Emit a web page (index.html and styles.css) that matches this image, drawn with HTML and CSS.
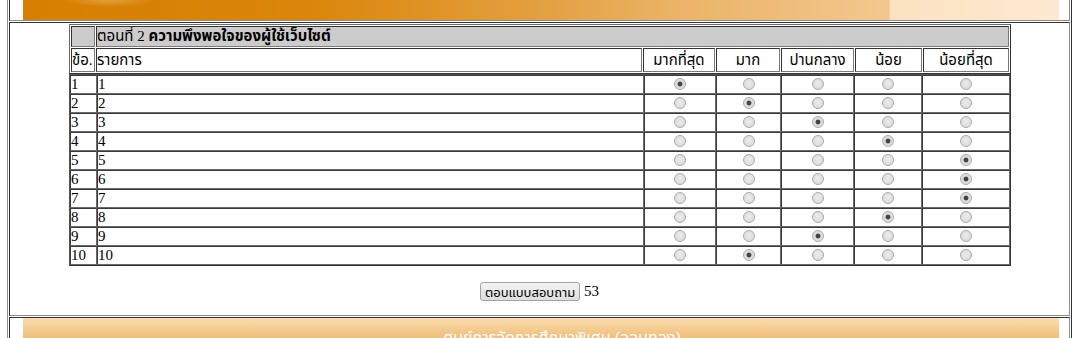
FILE: index.html
```html
<!DOCTYPE html>
<html lang="th">
<head>
    <meta charset="UTF-8">
    <title>แบบสอบถามความพึงพอใจ</title>
    <link rel="stylesheet" href="styles.css">
</head>
<body>
    <div class="frame">
        <div class="cell banner-cell">
            <div class="top-banner"></div>
        </div>

        <div class="cell content-cell">
            <form class="survey">
                <table class="survey-head">
                    <colgroup>
                        <col class="h-no"><col class="h-item"><col class="h-a"><col class="h-b"><col class="h-c"><col class="h-d"><col class="h-e">
                    </colgroup>
                    <tr class="title-row">
                        <td></td>
                        <td colspan="6">ตอนที่ 2 <b>ความพึงพอใจของผู้ใช้เว็บไซต์</b></td>
                    </tr>
                    <tr class="label-row">
                        <td>ข้อ.</td>
                        <td>รายการ</td>
                        <td class="mid">มากที่สุด</td>
                        <td class="mid">มาก</td>
                        <td class="mid">ปานกลาง</td>
                        <td class="mid">น้อย</td>
                        <td class="mid">น้อยที่สุด</td>
                    </tr>
                </table>

                <table class="survey-body">
                    <colgroup>
                        <col class="col-no"><col class="col-item"><col class="col-a"><col class="col-b"><col class="col-c"><col class="col-d"><col class="col-e">
                    </colgroup>
                    <tr><td>1</td><td>1</td>
                        <td class="mid"><input type="radio" name="q1" checked></td><td class="mid"><input type="radio" name="q1"></td><td class="mid"><input type="radio" name="q1"></td><td class="mid"><input type="radio" name="q1"></td><td class="mid"><input type="radio" name="q1"></td></tr>
                    <tr><td>2</td><td>2</td>
                        <td class="mid"><input type="radio" name="q2"></td><td class="mid"><input type="radio" name="q2" checked></td><td class="mid"><input type="radio" name="q2"></td><td class="mid"><input type="radio" name="q2"></td><td class="mid"><input type="radio" name="q2"></td></tr>
                    <tr><td>3</td><td>3</td>
                        <td class="mid"><input type="radio" name="q3"></td><td class="mid"><input type="radio" name="q3"></td><td class="mid"><input type="radio" name="q3" checked></td><td class="mid"><input type="radio" name="q3"></td><td class="mid"><input type="radio" name="q3"></td></tr>
                    <tr><td>4</td><td>4</td>
                        <td class="mid"><input type="radio" name="q4"></td><td class="mid"><input type="radio" name="q4"></td><td class="mid"><input type="radio" name="q4"></td><td class="mid"><input type="radio" name="q4" checked></td><td class="mid"><input type="radio" name="q4"></td></tr>
                    <tr><td>5</td><td>5</td>
                        <td class="mid"><input type="radio" name="q5"></td><td class="mid"><input type="radio" name="q5"></td><td class="mid"><input type="radio" name="q5"></td><td class="mid"><input type="radio" name="q5"></td><td class="mid"><input type="radio" name="q5" checked></td></tr>
                    <tr><td>6</td><td>6</td>
                        <td class="mid"><input type="radio" name="q6"></td><td class="mid"><input type="radio" name="q6"></td><td class="mid"><input type="radio" name="q6"></td><td class="mid"><input type="radio" name="q6"></td><td class="mid"><input type="radio" name="q6" checked></td></tr>
                    <tr><td>7</td><td>7</td>
                        <td class="mid"><input type="radio" name="q7"></td><td class="mid"><input type="radio" name="q7"></td><td class="mid"><input type="radio" name="q7"></td><td class="mid"><input type="radio" name="q7"></td><td class="mid"><input type="radio" name="q7" checked></td></tr>
                    <tr><td>8</td><td>8</td>
                        <td class="mid"><input type="radio" name="q8"></td><td class="mid"><input type="radio" name="q8"></td><td class="mid"><input type="radio" name="q8"></td><td class="mid"><input type="radio" name="q8" checked></td><td class="mid"><input type="radio" name="q8"></td></tr>
                    <tr><td>9</td><td>9</td>
                        <td class="mid"><input type="radio" name="q9"></td><td class="mid"><input type="radio" name="q9"></td><td class="mid"><input type="radio" name="q9" checked></td><td class="mid"><input type="radio" name="q9"></td><td class="mid"><input type="radio" name="q9"></td></tr>
                    <tr><td>10</td><td>10</td>
                        <td class="mid"><input type="radio" name="q10"></td><td class="mid"><input type="radio" name="q10" checked></td><td class="mid"><input type="radio" name="q10"></td><td class="mid"><input type="radio" name="q10"></td><td class="mid"><input type="radio" name="q10"></td></tr>
                </table>

                <div class="submit-row">
                    <button type="button">ตอบแบบสอบถาม</button> 53
                </div>
            </form>
        </div>

        <div class="cell banner-cell">
            <div class="bottom-banner">ศูนย์การจัดการศึกษาพิเศษ (จอมทอง)</div>
        </div>
    </div>
</body>
</html>
```

FILE: styles.css
```css
html, body {
    margin: 0;
    overflow: hidden;
}

body {
    background: #fff;
    color: #000;
    font-family: "Liberation Serif", Tahoma, "Noto Sans Thai", Loma, Garuda, serif;
    font-size: 15px;
}

/* outer page table */
.frame {
    width: 1061px;
    margin-left: 7px;
    padding: 0 1px;
    border-left: 1px solid #8c8c8c;
    border-right: 1px solid #333;
    display: flex;
    flex-direction: column;
    gap: 1px;
}

.cell {
    border: 1px solid;
    border-color: #333 #8c8c8c #8c8c8c #333;
}

.banner-cell:first-child {
    border-top: none;
}

.top-banner {
    margin-left: 13px;
    width: 1036px;
    height: 20px;
    background:
        radial-gradient(ellipse 45px 7px at 85px 0, rgba(255, 230, 190, 0.3), rgba(255, 230, 190, 0)),
        linear-gradient(90deg, #d77f00 0%, #da860c 28%, #e3a040 50%, #eab264 62%, #f2c78f 83.6%, #fbe1bf 83.7%, #fde9d2 100%);
}

.bottom-banner {
    margin-left: 13px;
    width: 1036px;
    height: 34px;
    padding: 8px 0 0 42px;
    box-sizing: border-box;
    background: linear-gradient(#fadcae, #f0bd79 60%, #eeb56c);
    color: #fff;
    font-size: 16px;
    text-align: center;
}

/* survey */
.survey {
    margin: 0;
    padding-top: 1px;
}

.survey table {
    width: 942px;
    margin-left: 59px;
    table-layout: fixed;
}

.survey td {
    padding: 0;
    box-sizing: border-box;
    white-space: nowrap;
    overflow: hidden;
}

.survey .mid {
    text-align: center;
}

/* header columns, 1px spacing between cells */
.h-no { width: 24px; }
.h-item { width: 546px; }
.h-a { width: 72px; }
.h-b { width: 64px; }
.h-c { width: 73px; }
.h-d { width: 67px; }
.h-e { width: 86px; }

/* answer columns, no spacing */
.col-no { width: 27px; }
.col-item { width: 547px; }
.col-a { width: 72px; }
.col-b { width: 65px; }
.col-c { width: 73px; }
.col-d { width: 68px; }
.col-e { width: 88px; }

.survey-head {
    border-collapse: separate;
    border-spacing: 1px;
    border: 1px solid;
    border-color: #6a6a6a #333 #333 #6a6a6a;
}

.survey-head td {
    border: 1px solid;
    border-color: #333 #7a7a7a #7a7a7a #333;
    font-size: 15px;
}

.title-row td {
    height: 21px;
    background: #ccc;
    line-height: 19px;
}

.label-row td {
    height: 24px;
    line-height: 22px;
}

.survey-body {
    border-collapse: separate;
    border-spacing: 0;
    border: 1px solid;
    border-color: #555 #333 #333 #555;
}

.survey-body td {
    height: 19px;
    line-height: 17px;
    border: 1px solid;
    border-color: #3a3a3a #6a6a6a #6a6a6a #3a3a3a;
}

.survey-body input[type=radio] {
    appearance: none;
    width: 12px;
    height: 12px;
    margin: 0;
    border: 1px solid #ababab;
    border-radius: 50%;
    background: radial-gradient(circle at 50% 45%, #ececec, #d6d6d6);
    vertical-align: -1px;
}

.survey-body input[type=radio]:checked {
    background: radial-gradient(circle, #444 0, #444 2px, #d9d9d9 2.8px, #e4e4e4);
}

.submit-row {
    padding: 16px 0 14px;
    line-height: 19px;
    height: 19px;
    text-align: center;
    font-size: 15px;
}

.submit-row button {
    height: 19px;
    padding: 0 4px;
    border: 1px solid #a3a3a3;
    border-radius: 3px;
    background: linear-gradient(#f4f4f4, #dedede);
    font-family: Tahoma, "Noto Sans Thai", sans-serif;
    font-size: 13px;
    vertical-align: top;
}
```
